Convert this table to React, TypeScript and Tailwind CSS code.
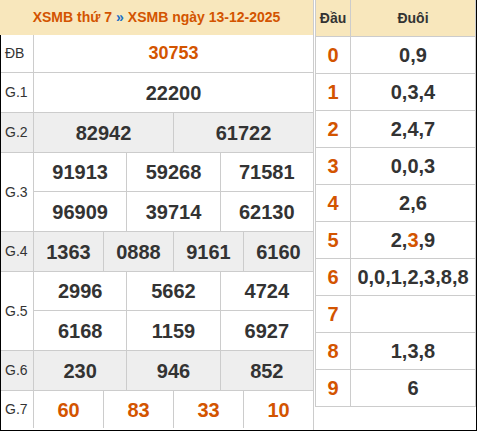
const ORANGE = "text-[#d35400]";
const DARK = "text-[#333333]";

interface PrizeRowProps {
  label: string;
  lines: string[][];
  gray?: boolean;
  h?: string;
  last?: boolean;
  tone?: string;
  size?: string;
}

function PrizeRow({
  label,
  lines,
  gray,
  h = "h-[39px]",
  last,
  tone = DARK,
  size = "text-[20px]",
}: PrizeRowProps) {
  return (
    <div
      className={`flex ${last ? "" : "border-b border-[#cccccc]"} ${
        gray ? "bg-[#eeeeee]" : "bg-white"
      }`}
    >
      <div className="flex w-[33px] shrink-0 items-center border-r border-[#cccccc] pl-[4px] text-[14px] text-[#333333]">
        {label}
      </div>

      <div className="flex flex-1 flex-col">
        {lines.map((line, i) => (
          <div
            key={i}
            className={`flex ${h} ${
              i < lines.length - 1 ? "border-b border-[#cccccc]" : ""
            }`}
          >
            {line.map((v, j) => (
              <div
                key={j}
                className={`flex flex-1 items-center justify-center font-bold ${size} ${tone} ${
                  j > 0 ? "border-l border-[#cccccc]" : ""
                }`}
              >
                {v}
              </div>
            ))}
          </div>
        ))}
      </div>
    </div>
  );
}

const TAILS: { head: string; tail: React.ReactNode }[] = [
  { head: "0", tail: "0,9" },
  { head: "1", tail: "0,3,4" },
  { head: "2", tail: "2,4,7" },
  { head: "3", tail: "0,0,3" },
  { head: "4", tail: "2,6" },
  {
    head: "5",
    tail: (
      <>
        2,<span className={ORANGE}>3</span>,9
      </>
    ),
  },
  { head: "6", tail: "0,0,1,2,3,8,8" },
  { head: "7", tail: "" },
  { head: "8", tail: "1,3,8" },
  { head: "9", tail: "6" },
];

export default function App() {
  return (
    <div className="flex h-[431px] w-[477px] border-b border-r border-black bg-white font-['Liberation_Sans',Arial,sans-serif]">
      {/* Kết quả */}
      <div className="flex w-[314px] shrink-0 flex-col border-r border-[#cccccc]">
        <div className="flex h-[35px] items-center justify-center bg-[#f8e7bc] text-[14px] font-bold text-[#d35400]">
          <span>XSMB thứ 7</span>
          <span className="mx-[4px] text-[#1a6fc4]">»</span>
          <span>XSMB ngày 13-12-2025</span>
        </div>

        <div className="flex flex-1 flex-col border-l border-black">
          <PrizeRow
            label="ĐB"
            lines={[["30753"]]}
            h="h-[37px]"
            tone={ORANGE}
            size="text-[18px]"
          />
          <PrizeRow label="G.1" lines={[["22200"]]} />
          <PrizeRow label="G.2" lines={[["82942", "61722"]]} gray />
          <PrizeRow
            label="G.3"
            lines={[
              ["91913", "59268", "71581"],
              ["96909", "39714", "62130"],
            ]}
          />
          <PrizeRow
            label="G.4"
            lines={[["1363", "0888", "9161", "6160"]]}
            gray
          />
          <PrizeRow
            label="G.5"
            lines={[
              ["2996", "5662", "4724"],
              ["6168", "1159", "6927"],
            ]}
          />
          <PrizeRow label="G.6" lines={[["230", "946", "852"]]} gray />
          <PrizeRow
            label="G.7"
            lines={[["60", "83", "33", "10"]]}
            h="h-[37px]"
            tone={ORANGE}
            last
          />
        </div>
      </div>

      {/* Đầu - Đuôi */}
      <div className="ml-[1px] flex w-[161px] shrink-0 flex-col self-start border-l border-r border-[#cccccc]">
        <div className="flex h-[37px] border-b border-[#cccccc] bg-[#f8e7bc] text-[14px] font-bold text-[#333333]">
          <div className="flex w-[35px] items-center justify-center border-r border-[#cccccc]">
            Đầu
          </div>
          <div className="flex flex-1 items-center justify-center">Đuôi</div>
        </div>

        {TAILS.map((row) => (
          <div
            key={row.head}
            className="flex h-[37px] border-b border-[#cccccc] text-[20px] font-bold"
          >
            <div className="flex w-[35px] items-center justify-center border-r border-[#cccccc] text-[#d35400]">
              {row.head}
            </div>
            <div className="flex flex-1 items-center justify-center text-[#333333]">
              {row.tail}
            </div>
          </div>
        ))}
      </div>
    </div>
  );
}
